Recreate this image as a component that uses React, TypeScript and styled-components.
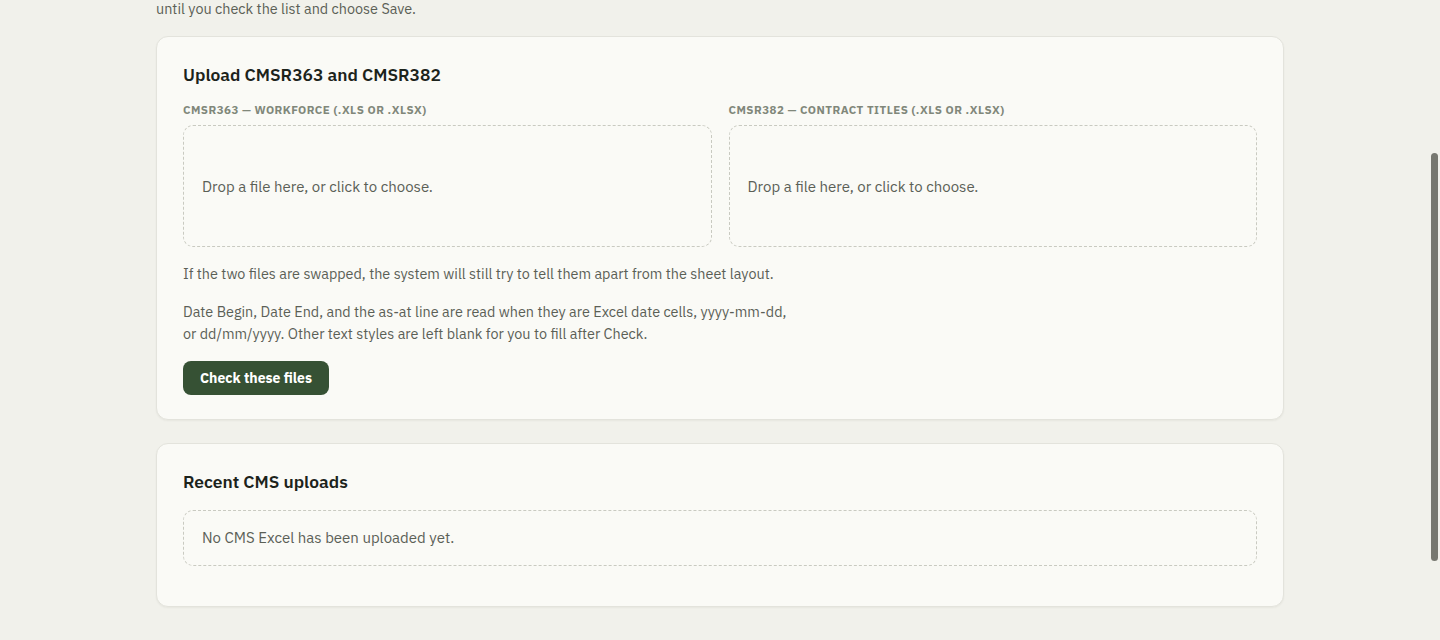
import React, { useLayoutEffect, useRef, useState } from 'react';
import styled, { createGlobalStyle } from 'styled-components';

const GlobalStyle = createGlobalStyle`
  html, body {
    margin: 0;
    padding: 0;
    height: 100%;
    background: #f1f1eb;
    overflow: hidden;
  }
  body {
    font-family: "IBM Plex Sans", Roboto, "Liberation Sans", sans-serif;
    color: #5b6056;
    -webkit-font-smoothing: antialiased;
  }
  #root {
    height: 100%;
  }
`;

const Frame = styled.div`
  position: relative;
  height: 100vh;
`;

const Viewport = styled.div`
  height: 100%;
  overflow-y: auto;
  scrollbar-width: none;
  &::-webkit-scrollbar {
    display: none;
  }
`;

// overlay scrollbar thumb, sized from the scroll metrics at run time
const Thumb = styled.div`
  position: absolute;
  right: 2px;
  width: 7px;
  border-radius: 4px;
  background: #777870;
  pointer-events: none;
`;

const TopBar = styled.header`
  height: 64px;
  background: #2f472b;
  display: flex;
  align-items: center;
  padding: 0 24px;
  color: #f1f1eb;
  font-weight: 700;
  font-size: 15px;
`;

const Main = styled.main`
  max-width: 1128px;
  margin: 0 auto;
  padding: 71px 0 156px;
  display: flex;
  flex-direction: column;
  gap: 23px;
`;

const PageHead = styled.div`
  display: flex;
  flex-direction: column;
  gap: 10px;
  margin-bottom: -7px;
`;

const Crumb = styled.div`
  font-size: 13px;
  line-height: 20px;
  color: #80877a;
`;

const PageTitle = styled.h1`
  margin: 0;
  font-size: 32px;
  line-height: 40px;
  font-weight: 600;
  color: #1c231b;
`;

const Lead = styled.p`
  margin: 0;
  font-size: 14.4px;
  line-height: 22px;
  max-width: 760px;
`;

const Card = styled.section<{ $tail?: number }>`
  background: #fafaf6;
  border: 1px solid #e3e3dc;
  border-radius: 12px;
  padding: 24px 26px ${(p) => 24 + (p.$tail ?? 0)}px;
  box-shadow: 0 1px 2px rgba(30, 40, 25, 0.05);
`;

const CardTitle = styled.h2`
  margin: 0 0 14px;
  font-size: 17.4px;
  line-height: 28px;
  font-weight: 600;
  color: #1c231b;
`;

const UploadGrid = styled.div`
  display: grid;
  grid-template-columns: 1fr 1fr;
  gap: 17px;
`;

const Field = styled.div`
  display: flex;
  flex-direction: column;
  gap: 8px;
`;

const FieldLabel = styled.label`
  font-size: 11.5px;
  line-height: 14px;
  font-weight: 700;
  letter-spacing: 0.04em;
  text-transform: uppercase;
  color: #80877a;
`;

const DropZone = styled.div`
  height: 122px;
  box-sizing: border-box;
  border: 1px dashed #c9cac1;
  border-radius: 10px;
  padding: 0 18px;
  display: flex;
  align-items: center;
  font-size: 15px;
  color: #5b6056;
  cursor: pointer;
`;

const Note = styled.p`
  margin: 16px 0 0;
  font-size: 14.4px;
  line-height: 22px;
  max-width: 612px;
  color: #5b6056;
`;

const PrimaryButton = styled.button`
  margin-top: 16px;
  height: 34px;
  padding: 0 17px;
  border: none;
  border-radius: 8px;
  background: #365134;
  color: #ffffff;
  font-family: inherit;
  font-size: 14px;
  font-weight: 700;
  cursor: pointer;
`;

const EmptyState = styled.div`
  border: 1px dashed #c9cac1;
  border-radius: 10px;
  padding: 17px 18px;
  font-size: 15px;
  line-height: 20px;
  color: #5b6056;
`;

const uploads = [
  { id: 'cmsr363', label: 'CMSR363 — Workforce (.xls or .xlsx)' },
  { id: 'cmsr382', label: 'CMSR382 — Contract titles (.xls or .xlsx)' },
];

const App: React.FC = () => {
  const viewRef = useRef<HTMLDivElement>(null);
  const cardRef = useRef<HTMLElement>(null);
  const [thumb, setThumb] = useState({ top: 0, height: 0 });

  useLayoutEffect(() => {
    const view = viewRef.current;
    const card = cardRef.current;
    if (!view || !card) return;
    view.scrollTop = card.offsetTop - 36;
    const ratio = view.clientHeight / view.scrollHeight;
    setThumb({ top: view.scrollTop * ratio, height: view.clientHeight * ratio });
  }, []);

  return (
    <>
      <GlobalStyle />
      <Frame>
        <Viewport ref={viewRef}>
          <TopBar>Staff records</TopBar>
          <Main>
            <PageHead>
              <Crumb>Staff / Imports</Crumb>
              <PageTitle>CMS Excel import</PageTitle>
              <Lead>
                Upload the two CMS reports. The rows are read and matched to staff records, but nothing is saved
                <br />
                until you check the list and choose Save.
              </Lead>
            </PageHead>

            <Card ref={cardRef}>
              <CardTitle>Upload CMSR363 and CMSR382</CardTitle>
              <UploadGrid>
                {uploads.map((u) => (
                  <Field key={u.id}>
                    <FieldLabel htmlFor={u.id}>{u.label}</FieldLabel>
                    <DropZone id={u.id}>Drop a file here, or click to choose.</DropZone>
                  </Field>
                ))}
              </UploadGrid>
              <Note>If the two files are swapped, the system will still try to tell them apart from the sheet layout.</Note>
              <Note>
                Date Begin, Date End, and the as-at line are read when they are Excel date cells, yyyy-mm-dd, or
                dd/mm/yyyy. Other text styles are left blank for you to fill after Check.
              </Note>
              <PrimaryButton>Check these files</PrimaryButton>
            </Card>

            <Card $tail={16}>
              <CardTitle>Recent CMS uploads</CardTitle>
              <EmptyState>No CMS Excel has been uploaded yet.</EmptyState>
            </Card>
          </Main>
        </Viewport>
        <Thumb style={{ top: thumb.top, height: thumb.height }} />
      </Frame>
    </>
  );
};

export default App;
